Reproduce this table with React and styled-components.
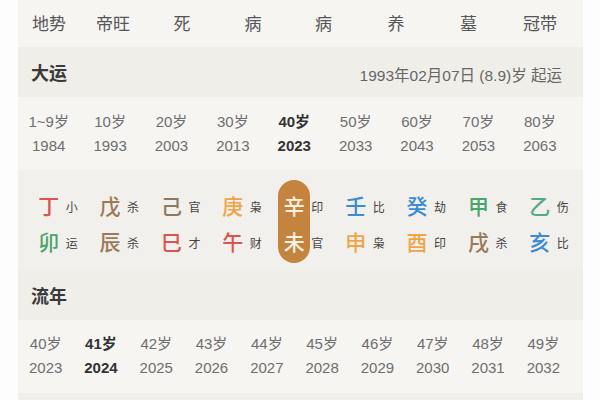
import React from "react";
import styled, { createGlobalStyle } from "styled-components";

const Global = createGlobalStyle`
  html, body { margin: 0; padding: 0; background: #fdfdfd; }
  body { font-family: "Liberation Sans", "Noto Sans CJK SC", sans-serif; }
`;

const Page = styled.div`
  width: 600px;
  height: 400px;
  overflow: hidden;
  display: flex;
  padding: 0 17px 0 18px;
  box-sizing: border-box;
  background: #fdfdfd;
`;

const Panel = styled.div`
  flex: 1;
  display: flex;
  flex-direction: column;
  background: #f6f5f2;
`;

const StageRow = styled.div`
  height: 47px;
  display: grid;
  grid-template-columns: 62px 66px 72px 70px 71px 74px 71px 72px;
  align-items: center;
  justify-items: center;
  padding-bottom: 2px;
  box-sizing: border-box;
  font-size: 17px;
  color: #555;
  background: #f6f5f2;
`;

const Header = styled.div`
  height: ${(p) => p.$h}px;
  display: flex;
  align-items: center;
  justify-content: space-between;
  padding: ${(p) => p.$pt || 0}px 21px 0 13px;
  box-sizing: border-box;
  background: #f0eee9;
`;

const Title = styled.div`
  font-size: 18px;
  font-weight: 700;
  color: #3a3a3a;
`;

const DateNote = styled.div`
  font-size: 15.5px;
  color: #666;
  padding-top: 4px;
`;

const Grid9 = styled.div`
  display: grid;
  grid-template-columns: repeat(${(p) => p.$n || 9}, ${(p) => p.$w || 61.4}px);
  padding: ${(p) => p.$pad};
  background: ${(p) => p.$bg || "#f6f5f2"};
`;

const YearCell = styled.div`
  display: flex;
  flex-direction: column;
  align-items: center;
  font-size: 15px;
  line-height: 24px;
  color: ${(p) => (p.$bold ? "#333" : "#6e6e6e")};
  font-weight: ${(p) => (p.$bold ? 700 : 400)};
`;

const GzCol = styled.div`
  display: grid;
  grid-template-columns: 1fr 32px 1fr;
  align-items: stretch;
`;

const BigStack = styled.div`
  grid-column: 2;
  display: flex;
  flex-direction: column;
  align-items: center;
  padding: 7px 0 4px;
  border-radius: 16px;
  background: ${(p) => (p.$active ? "#c4843e" : "transparent")};
`;

const Big = styled.div`
  height: 36px;
  line-height: 36px;
  font-size: 21px;
  font-family: "Noto Sans CJK SC", sans-serif;
  font-weight: 500;
  color: ${(p) => p.$c};
`;

const SmallStack = styled.div`
  grid-column: 3;
  display: flex;
  flex-direction: column;
  padding: 7px 0 4px 1px;
`;

const Small = styled.div`
  height: 36px;
  line-height: 40px;
  font-size: 12px;
  font-family: "Noto Sans CJK SC", sans-serif;
  color: #444;
  white-space: nowrap;
`;

const Bottom = styled.div`
  flex: 1;
  background: #f0eee9;
`;

const stages = ["地势", "帝旺", "死", "病", "病", "养", "墓", "冠带"];

const dayun = [
  ["1~9岁", "1984"],
  ["10岁", "1993"],
  ["20岁", "2003"],
  ["30岁", "2013"],
  ["40岁", "2023", true],
  ["50岁", "2033"],
  ["60岁", "2043"],
  ["70岁", "2053"],
  ["80岁", "2063"],
];

const RED = "#d95550";
const BROWN = "#9b7a56";
const BROWN2 = "#8d7862";
const ORANGE = "#f0a448";
const BLUE = "#3b8bd6";
const GREEN = "#4aa46c";
const GREEN2 = "#55a98a";
const CREAM = "#fbf1e2";

const ganzhi = [
  { t: ["丁", RED, "小"], b: ["卯", GREEN, "运"] },
  { t: ["戊", BROWN, "杀"], b: ["辰", BROWN, "杀"] },
  { t: ["己", BROWN2, "官"], b: ["巳", RED, "才"] },
  { t: ["庚", ORANGE, "枭"], b: ["午", RED, "财"] },
  { t: ["辛", CREAM, "印"], b: ["未", CREAM, "官"], active: true },
  { t: ["壬", BLUE, "比"], b: ["申", ORANGE, "枭"] },
  { t: ["癸", BLUE, "劫"], b: ["酉", ORANGE, "印"] },
  { t: ["甲", GREEN, "食"], b: ["戌", BROWN, "杀"] },
  { t: ["乙", GREEN2, "伤"], b: ["亥", BLUE, "比"] },
];

const liunian = [
  ["40岁", "2023"],
  ["41岁", "2024", true],
  ["42岁", "2025"],
  ["43岁", "2026"],
  ["44岁", "2027"],
  ["45岁", "2028"],
  ["46岁", "2029"],
  ["47岁", "2030"],
  ["48岁", "2031"],
  ["49岁", "2032"],
];

export default function App() {
  return (
    <>
      <Global />
      <Page>
        <Panel>
          <StageRow>
            {stages.map((s, i) => (
              <div key={i}>{s}</div>
            ))}
          </StageRow>
          <Header $h={50}>
            <Title>大运</Title>
            <DateNote>1993年02月07日 (8.9)岁 起运</DateNote>
          </Header>
          <Grid9 $pad="13px 0 12px">
            {dayun.map(([a, y, b], i) => (
              <YearCell key={i} $bold={b}>
                <span>{a}</span>
                <span>{y}</span>
              </YearCell>
            ))}
          </Grid9>
          <Grid9 $pad="10px 0 5px" $bg="#f2f0ec">
            {ganzhi.map((g, i) => (
              <GzCol key={i}>
                <BigStack $active={g.active}>
                  <Big $c={g.t[1]}>{g.t[0]}</Big>
                  <Big $c={g.b[1]}>{g.b[0]}</Big>
                </BigStack>
                <SmallStack>
                  <Small>{g.t[2]}</Small>
                  <Small>{g.b[2]}</Small>
                </SmallStack>
              </GzCol>
            ))}
          </Grid9>
          <Header $h={52} $pt={2}>
            <Title>流年</Title>
          </Header>
          <Grid9 $pad="12px 0 13px" $n={10} $w={55.3}>
            {liunian.map(([a, y, b], i) => (
              <YearCell key={i} $bold={b}>
                <span>{a}</span>
                <span>{y}</span>
              </YearCell>
            ))}
          </Grid9>
          <Bottom />
        </Panel>
      </Page>
    </>
  );
}
